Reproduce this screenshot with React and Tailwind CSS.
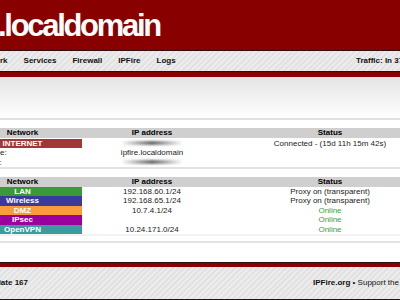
const stripes =
  "bg-[repeating-linear-gradient(135deg,#ececec_0px,#ececec_2px,#e2e2e2_2px,#e2e2e2_4px)]";

function Blur() {
  return (
    <div className="h-[4px] w-[62px] rounded-full bg-linear-to-r from-transparent via-[#6a6a6a] to-transparent blur-[1px]" />
  );
}

function HeadRow() {
  return (
    <div className="grid grid-cols-[119px_140px_216px] h-[9.5px] bg-[#cfcfcf] font-bold text-black">
      <div className="text-center">Network</div>
      <div className="text-center">IP address</div>
      <div className="text-center">Status</div>
    </div>
  );
}

const zones = [
  { name: "LAN", bg: "bg-[#3a9a3a]", ip: "192.168.60.1/24", status: "Proxy on (transparent)", green: false },
  { name: "Wireless", bg: "bg-[#3a3a9a]", ip: "192.168.65.1/24", status: "Proxy on (transparent)", green: false },
  { name: "DMZ", bg: "bg-[#fa9c3c]", ip: "10.7.4.1/24", status: "Online", green: true },
  { name: "IPsec", bg: "bg-[#9c009c]", ip: "", status: "Online", green: true },
  { name: "OpenVPN", bg: "bg-[#3a9c9c]", ip: "10.24.171.0/24", status: "Online", green: true },
];

export default function App() {
  return (
    <div className="w-[400px] h-[300px] overflow-hidden bg-white font-['Liberation_Sans',Arial,sans-serif] whitespace-nowrap">
      {/* header */}
      <div className="h-[50px] bg-[#880000] pt-[10px]">
        <div className="ml-[-2px] text-[31px] leading-none font-bold tracking-[-2.3px] text-white">
          .localdomain
        </div>
      </div>

      {/* menu */}
      <div className={`h-[22px] border-y border-[#2b1010] ${stripes} flex items-center text-[8px] font-bold text-[#111]`}>
        <div className="flex w-[380px] ml-[-24px] shrink-0 gap-[16px]">
          <span>Network</span>
          <span>Services</span>
          <span>Firewall</span>
          <span>IPFire</span>
          <span>Logs</span>
        </div>
        <span>Traffic: In 37.21 kbit/s</span>
      </div>
      <div className="h-[5px] bg-[#8a0000]" />

      {/* content */}
      <div className="h-[41px] bg-linear-to-b from-[#e4e4e4] to-white" />
      <div className="h-[2px] bg-[#e2e2e2]" />

      <div className="ml-[-37px] w-[475px] text-[8px] leading-[9.5px] text-[#222]">
        <div className="h-[8px]" />
        <HeadRow />
        <div className="h-[1px]" />
        <div className="grid grid-cols-[119px_140px_216px] h-[9.5px]">
          <div className="bg-[#a03838] text-center font-bold text-white">INTERNET</div>
          <div className="flex items-center justify-center"><Blur /></div>
          <div className="text-center">Connected - (15d 11h 15m 42s)</div>
        </div>
        <div className="grid grid-cols-[119px_140px_216px] h-[9.5px]">
          <div className="pl-[5px]">Hostname:</div>
          <div className="text-center">ipfire.localdomain</div>
          <div />
        </div>
        <div className="grid grid-cols-[119px_140px_216px] h-[9.5px]">
          <div className="pl-[5px]">Gateway:</div>
          <div className="flex items-center justify-center"><Blur /></div>
          <div />
        </div>
      </div>
      <div className="h-[1.5px] bg-[#e2e2e2]" />

      <div className="ml-[-37px] w-[475px] text-[8px] leading-[9.5px] text-[#222]">
        <div className="h-[8.5px]" />
        <HeadRow />
        {zones.map((z) => (
          <div key={z.name} className="grid grid-cols-[119px_140px_216px] h-[9.5px]">
            <div className={`${z.bg} text-center font-bold text-white`}>{z.name}</div>
            <div className="text-center">{z.ip}</div>
            <div className={`text-center ${z.green ? "text-[#3a9c3a]" : ""}`}>{z.status}</div>
          </div>
        ))}
      </div>
      <div className="h-[2px] bg-[#f2f2f2]" />
      <div className="h-[5px]" />
      <div className="h-[2px] bg-[#e2e2e2]" />
      <div className="h-[19px]" />

      {/* footer */}
      <div className="h-[1px] bg-[#2b1010]" />
      <div className="h-[4px] bg-[#8a0000]" />
      <div className={`h-[32px] ${stripes} flex items-center text-[8px] text-[#111]`}>
        <div className="ml-[-172px] w-[200px] shrink-0 text-right font-bold">
          IPFire 2.27 (x86_64) - Core Update 167
        </div>
        <div className="ml-[285px] shrink-0">
          <span className="font-bold">IPFire.org</span> • Support the IPFire project
        </div>
      </div>
      <div className="h-[1px] bg-[#2b1010]" />
      <div className="h-[4px] bg-[#8a0000]" />
    </div>
  );
}
